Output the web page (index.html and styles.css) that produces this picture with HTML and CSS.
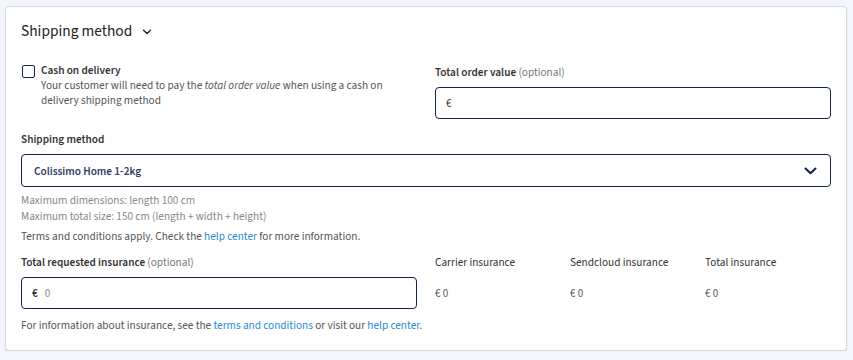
FILE: index.html
```
<!DOCTYPE html>
<html lang="en">
<head>
  <meta charset="UTF-8" />
  <meta name="viewport" content="width=device-width, initial-scale=1.0"/>
  <title>Shipping method</title>
  <link rel="stylesheet" href="styles.css">
</head>
<body>

  <section class="card">
    <h2 class="card-title">
      Shipping method
      <svg class="title-chevron" width="10" height="6" viewBox="0 0 10 6"><path d="M1.5 1.2 L5 4.6 L8.5 1.2" fill="none" stroke="#222" stroke-width="1.4" stroke-linecap="round" stroke-linejoin="round"/></svg>
    </h2>

    <div class="row row-top">
      <label class="checkbox">
        <span class="checkbox-box"></span>
        <span class="checkbox-text">
          <span class="checkbox-title">Cash on delivery</span>
          <span class="checkbox-desc">Your customer will need to pay the <em>total order value</em> when using a cash on delivery shipping method</span>
        </span>
      </label>

      <div class="field field-order">
        <div class="field-label">Total order value <span class="optional">(optional)</span></div>
        <div class="input">
          <span class="prefix">€</span>
        </div>
      </div>
    </div>

    <div class="field field-method">
      <div class="field-label">Shipping method</div>
      <div class="select">
        <span class="select-value">Colissimo Home 1-2kg</span>
        <svg class="select-chevron" width="13" height="8" viewBox="0 0 13 8"><path d="M1.5 1.5 L6.5 6.2 L11.5 1.5" fill="none" stroke="#12254f" stroke-width="2.1" stroke-linecap="round" stroke-linejoin="round"/></svg>
      </div>
      <div class="hints">
        <div class="hint">Maximum dimensions: length 100 cm</div>
        <div class="hint">Maximum total size: 150 cm (length + width + height)</div>
      </div>
      <p class="terms">Terms and conditions apply. Check the <a href="#">help center</a> for more information.</p>
    </div>

    <div class="row insurance">
      <div class="field">
        <div class="field-label">Total requested insurance <span class="optional">(optional)</span></div>
        <div class="input">
          <span class="prefix prefix-strong">€</span>
          <span class="input-value">0</span>
        </div>
      </div>

      <div class="insurance-grid">
        <div class="insurance-item">
          <div class="insurance-label">Carrier insurance</div>
          <div class="insurance-value">€ 0</div>
        </div>
        <div class="insurance-item">
          <div class="insurance-label">Sendcloud insurance</div>
          <div class="insurance-value">€ 0</div>
        </div>
        <div class="insurance-item">
          <div class="insurance-label">Total insurance</div>
          <div class="insurance-value">€ 0</div>
        </div>
      </div>
    </div>

    <p class="note">For information about insurance, see the <a href="#">terms and conditions</a> or visit our <a href="#">help center</a>.</p>
  </section>

</body>
</html>
```

FILE: styles.css
```
body {
  background: #f3f7fc;
  font-family: 'Source Sans 3', 'Lato', sans-serif;
  font-size: 11.25px;
  line-height: 15px;
  color: #333;
  margin: 0;
  padding: 6px 6px 0 5px;
}

.card {
  background: #fff;
  border: 1px solid #d4d8de;
  border-radius: 4px;
  box-shadow: 0 1px 1px rgba(0, 0, 0, 0.12);
  padding: 14px 15px 17px;
}

.card-title {
  margin: 0;
  font-size: 15.4px;
  line-height: 20px;
  font-weight: 400;
  color: #222;
  display: flex;
  align-items: center;
  gap: 10px;
}

.title-chevron {
  margin-top: 2px;
}

.row {
  display: grid;
  grid-template-columns: 1fr 1fr;
  gap: 18px;
}

.row-top {
  margin-top: 22px;
}

.checkbox {
  display: flex;
  gap: 6px;
  align-items: flex-start;
  padding-left: 1px;
}

.checkbox-box {
  flex: none;
  width: 13px;
  height: 13px;
  box-sizing: border-box;
  border: 1.5px solid #12254f;
  border-radius: 2px;
  margin-top: 2px;
}

.checkbox-text {
  display: flex;
  flex-direction: column;
}

.checkbox-title {
  font-weight: 600;
  color: #333;
}

.checkbox-desc {
  color: #555;
  padding-right: 20px;
}

.field-label {
  font-weight: 600;
  color: #333;
  margin-bottom: 9px;
}

.field-order {
  padding-top: 2px;
}

.field-order .field-label {
  margin-bottom: 7px;
}

.optional {
  font-weight: 400;
  color: #777;
}

.input {
  height: 32px;
  box-sizing: border-box;
  border: 1px solid #12254f;
  border-radius: 4px;
  display: flex;
  align-items: center;
  padding: 1px 10px 0;
  gap: 7px;
  font-size: 11px;
}

.prefix {
  color: #333;
}

.prefix-strong {
  font-weight: 600;
}

.input-value {
  color: #888;
}

.field-method {
  margin-top: 13px;
}

.field-method .field-label {
  margin-bottom: 7px;
}

.select {
  height: 33px;
  box-sizing: border-box;
  border: 1px solid #12254f;
  border-radius: 4px;
  display: flex;
  align-items: center;
  justify-content: space-between;
  padding: 1px 13px 0 12px;
}

.select-value {
  font-weight: 600;
  color: #2d3b63;
}

.hints {
  margin-top: 6px;
}

.hint {
  color: #888;
  line-height: 16px;
}

.terms {
  margin: 4px 0 0;
  color: #555;
}

a {
  color: #2a8ad6;
  text-decoration: none;
}

.insurance {
  margin-top: 11px;
}

.insurance .field-label {
  margin-bottom: 7px;
}

.insurance-grid {
  display: grid;
  grid-template-columns: 135px 135px 1fr;
}

.insurance-label {
  color: #333;
  margin-bottom: 7px;
}

.insurance-value {
  line-height: 32px;
  padding-top: 1px;
  font-size: 11px;
  color: #555;
}

.note {
  margin: 8px 0 0;
  color: #555;
}
```
